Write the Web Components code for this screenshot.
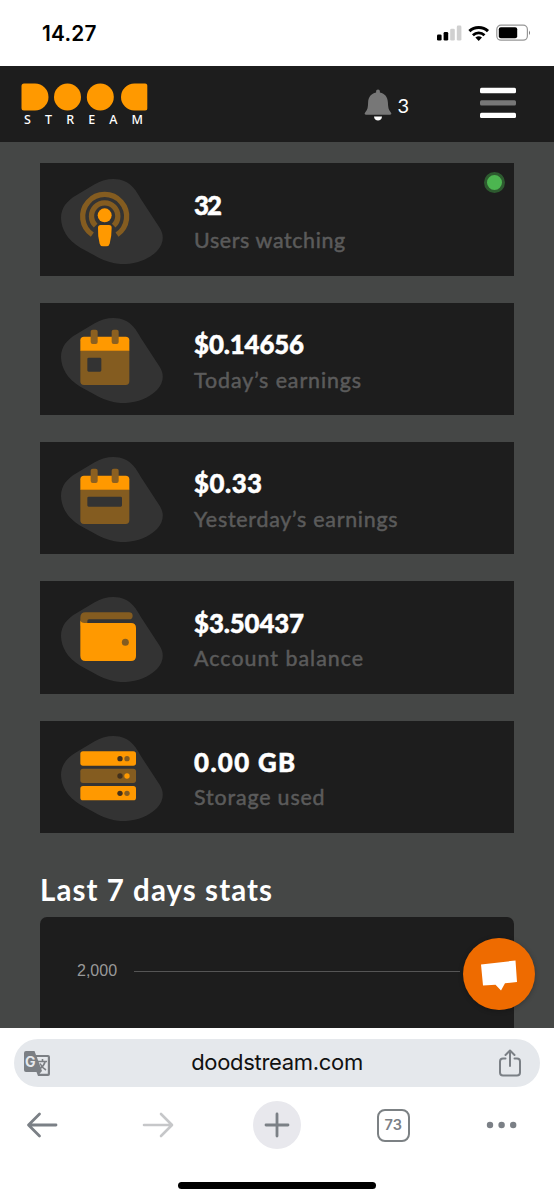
<!DOCTYPE html>
<html lang="en">
<head>
<meta charset="utf-8">
<title>DoodStream</title>
<style>
html,body{margin:0;padding:0}
body{width:554px;height:1200px;overflow:hidden;background:#fff;font-family:Lato,"Liberation Sans",sans-serif}
</style>
</head>
<body>
<dood-screen></dood-screen>
<script>
const define = (name, html, after) => customElements.define(name, class extends HTMLElement {
  connectedCallback() {
    if (this.shadowRoot) return;
    this.attachShadow({ mode: 'open' }).innerHTML = typeof html === 'function' ? html(this) : html;
    if (after) after(this);
  }
});

// Spreads a line of text over a given width by adjusting its tracking.
define('fit-text', `<style>:host{display:block;white-space:nowrap;width:max-content}span{display:inline-block}</style><span><slot></slot></span>`, el => {
  const n = el.textContent.length;
  const w = el.shadowRoot.querySelector('span').getBoundingClientRect().width;
  el.style.letterSpacing = ((+el.getAttribute('width') - w) / (n - 1)) + 'px';
});

define('status-bar', `<style>
:host{display:flex;height:66px;box-sizing:border-box;padding:0 23px 0 42px;align-items:center;justify-content:space-between;background:#fff;color:#000}
fit-text{font:600 20.800px/26px Inter,sans-serif;margin-top:2px}
svg{display:block}</style>
<fit-text width="54.500">14.27</fit-text>
<svg width="96" height="18" viewBox="0 0 96 18">
<rect x="2" y="10.5" width="4.6" height="6" rx="1.3"/><rect x="8.6" y="8" width="4.6" height="8.5" rx="1.3"/>
<g fill="#d0d0d0"><rect x="15.2" y="4.8" width="4.6" height="11.7" rx="1.3"/><rect x="21.8" y="1.6" width="4.6" height="14.9" rx="1.3"/></g>
<g fill="none" stroke="#000" stroke-width="3"><path d="M34.4 7.2a13.4 13.4 0 0 1 18.6 0"/><path d="M37.9 11.2a8.5 8.5 0 0 1 11.6 0" stroke-width="2.8"/></g>
<path d="M40.4 13.4q3.3-2.4 6.6 0l-3.3 3.5z"/>
<rect x="61.8" y="1.2" width="30.6" height="15" rx="4.2" fill="none" stroke="#969696" stroke-width="1.2"/><rect x="63.8" y="3.3" width="18.4" height="11" rx="2"/><path d="M94 6.4q2 2.3 0 4.6z" fill="#777"/>
</svg>`);

define('site-header', `<style>
:host{display:flex;height:76px;box-sizing:border-box;padding:0 38px 0 21px;background:#1d1d1d;color:#fff;justify-content:space-between}
.brand{padding-top:17px}svg{display:block}
.brand fit-text{font:500 12.5px/14px "Noto Sans",sans-serif;margin:1.5px 0 0 3px}
.right{display:flex;align-items:flex-start}
.bell{margin:23px 5px 0 0}.n{font:400 20px/24px Lato,sans-serif;margin:27px 71px 0 0}.menu{margin-top:21px}
</style>
<div class="brand"><svg width="127" height="28" viewBox="0 0 127 28" fill="#ff9900"><path d="M3 .5H14a13.5 13.5 0 0 1 0 27H3a2.5 2.5 0 0 1-2.5-2.5V3A2.5 2.5 0 0 1 3 .5z"/><circle cx="46.5" cy="14" r="13.5"/><circle cx="79.3" cy="14" r="13.5"/><path d="M124 .5H113.5a13.5 13.5 0 0 0 0 27H124a2.3 2.3 0 0 0 2.3-2.5V3A2.3 2.3 0 0 0 124 .5z"/></svg><fit-text width="119">STREAM</fit-text></div>
<div class="right">
<svg class="bell" width="28" height="33" viewBox="0 0 28 33"><path fill="#777" d="M14 .5c1.2 0 1.900.8 1.900 1.900v1.200c5 1 7.800 4.500 8 10 .2 4.500.5 7.500 2.800 9.600 1.200 1.200.7 2.600-.8 2.600H2.100c-1.500 0-2-1.400-.8-2.600 2.300-2.100 2.700-5.100 2.800-9.600.2-5.500 3-9 8-10V2.400C12.100 1.300 12.800.5 14 .5z"/><path fill="#fff" d="M10 27.500h8c0 5.300-8 5.300-8 0z"/></svg>
<span class="n">3</span>
<svg class="menu" width="36" height="32" viewBox="0 0 36 32"><g fill="#fff"><rect y=".8" width="36" height="5.400" rx="1.500"/><rect y="25.700" width="36" height="5.400" rx="1.500"/></g><rect y="13.300" width="36" height="5.200" rx="1.500" fill="#777"/></svg>
</div>`);

const BLOB = '<path fill="#333" d="M92 188C92 158 110 136 138 120L193 87C236 62 284 67 310 98C319 109 326 121 332 132L388 217C402 240 401 264 380 287C352 315 312 328 270 326C246 324 224 316 205 307L150 277C110 253 93 221 92 188Z"/>';
const cal = hole => `<g transform="translate(0 2)"><path fill="#845c20" fill-rule="evenodd" d="M150 166H297V259Q297 270 286 270H161Q150 270 150 259ZM${hole}Z"/><path fill="#f90" d="M150 167V136Q150 125 161 125H286Q297 125 297 136V167Z"/><g fill="#8c6020"><rect x="181" y="104" width="21" height="43" rx="6"/><rect x="244" y="104" width="21" height="43" rx="6"/></g></g>`;
const ICONS = {
  live: `<g fill="none" stroke="#845c20" stroke-width="16"><path d="M186 238A66 66 0 1 1 260 238"/><path d="M196 211A39.500 39.500 0 1 1 250 211"/></g><g fill="#f90" stroke="#333" stroke-width="7" paint-order="stroke"><circle cx="223" cy="180" r="21"/><path d="M203 217Q203 209 211 209H236Q244 209 244 217Q244 244 238 265Q236 273 228 273H218Q210 273 208 265Q202 244 203 217Z"/></g>`,
  today: cal('175 188H209Q213 188 213 192V226Q213 230 209 230H175Q171 230 171 226V192Q171 188 175 188'),
  yesterday: cal('175 188H271Q275 188 275 192V214Q275 218 271 218H175Q171 218 171 214V192Q171 188 175 188'),
  wallet: `<g transform="translate(0 7)"><path fill="#845c20" d="M150 150V126Q150 110 166 110H296Q306 110 307 120Q307 131 296 131H176Q171 131 171 136V150Z"/><path fill="#f90" d="M150 134Q152 142 162 142H302Q317 142 317 157V241Q317 256 302 256H166Q150 256 150 240Z"/><circle cx="285" cy="200" r="10.500" fill="#845c20"/></g>`,
  storage: `<g transform="translate(0 9)"><g fill="#f90"><rect x="150" y="108" width="167" height="43" rx="8"/><rect x="150" y="212" width="167" height="43" rx="8"/></g><rect x="150" y="160" width="167" height="43" rx="8" fill="#845c20"/><g fill="#42301c"><circle cx="269" cy="130" r="8"/><circle cx="269" cy="182" r="8"/><circle cx="269" cy="234" r="8"/></g><g fill="#845c20"><circle cx="290" cy="130" r="8"/><circle cx="290" cy="234" r="8"/></g><circle cx="290" cy="182" r="8" fill="#f90"/></g>`
};
define('stat-card', el => `<style>
:host{display:flex;position:relative;height:112.300px;background:#1d1d1d;box-sizing:border-box;padding:15.400px 0 0 20.600px}
svg{display:block;flex:none}
.t{margin:11px 0 0 31.500px}
.v{font:900 25.800px/30px Lato,sans-serif;color:#fff;-webkit-text-stroke:.5px #fff}
.l{font:400 21.400px/26px Lato,sans-serif;color:#5b5b5b;margin-top:7.500px;-webkit-text-stroke:.5px #5b5b5b}
i{position:absolute;right:9px;top:8.300px;width:15px;height:15px;border:3px solid #2d5a2f;border-radius:50%;background:#4cb550}
</style><svg width="102" height="85" viewBox="92 71 306 255">${BLOB}${ICONS[el.getAttribute('icon')]}</svg>
<div class="t"><fit-text class="v" width="${el.getAttribute('vw')}">${el.getAttribute('value')}</fit-text><fit-text class="l" width="${el.getAttribute('lw')}">${el.getAttribute('label')}</fit-text></div>${el.hasAttribute('online') ? '<i></i>' : ''}`);

define('stats-panel', `<style>
:host{display:block}
h2{margin:0;font:700 29.500px/36px Lato,sans-serif;color:#fff}
.p{height:108px;margin-top:9.500px;background:#1d1d1d;border-radius:7px;display:flex;align-items:center;padding:0 0 13px 37px}
.r{display:flex;align-items:center;flex:1}
span{font:400 16px/20px "Liberation Sans",sans-serif;color:#999}
b{height:1.500px;flex:1;background:#555;margin-left:17px;margin-right:54px}
</style><h2><fit-text width="232">Last 7 days stats</fit-text></h2><div class="p"><div class="r"><span>2,000</span><b></b></div></div>`);

define('chat-button', `<style>:host{display:block;width:72px;height:72px;border-radius:50%;background:#ee6b00;box-shadow:0 1px 5px #0004}svg{display:block}</style>
<svg width="72" height="72" viewBox="0 0 72 72"><path fill="#fff" d="M18 26.500L52.500 22.500L54 44L42 45.300L38 52.500L32.500 46.700L20 47.500Z"/></svg>`);

define('browser-bar', `<style>
:host{display:block;height:172px;background:#fff;box-sizing:border-box;padding-top:11px}
svg{display:block}
.url{height:48px;margin:0 14px;border-radius:24px;background:#e5e8ec;display:flex;align-items:center;justify-content:space-between;padding:0 19px 0 10px;box-sizing:border-box;color:#111}
.url fit-text{font:400 22px/28px Inter,sans-serif;margin:-2px 0 0 3px}
nav{display:flex;height:48px;margin-top:14px;padding:0 37px 0 26px;align-items:center;justify-content:space-between;color:#7b8086}
.plus{width:48px;height:48px;border-radius:50%;background:#e8e8ed;display:grid;place-items:center;margin-left:2px}
.tabs{width:33px;height:33px;box-sizing:border-box;border:2.500px solid #7c8184;border-radius:8px;display:grid;place-items:center;font:600 14.500px/18px Inter,sans-serif}
.home{width:198px;height:7px;border-radius:4px;background:#000;margin:33px auto 0}
</style>
<div class="url"><svg width="28" height="27" viewBox="0 0 28 27"><path fill="#7b7f84" d="M2 1H10.500L12 5H24Q26 5 26 7V24Q26 26 24 26H14L12.500 22H2Q0 22 0 20V3Q0 1 2 1Z"/><path fill="#e5e8ec" d="M12.800 7H23.800V23.800H15.500L18 21Z"/><g fill="none" stroke="#7b7f84" stroke-width="1.600"><path d="M14 11.500H23M18.500 9V12M21 12Q20 16 15.500 19M16 13.500Q18 17.500 22 20"/></g><text x="1" y="17" font-family="Inter,sans-serif" font-size="14" font-weight="700" fill="#e5e8ec">G</text></svg>
<fit-text width="172">doodstream.com</fit-text>
<svg width="22" height="28" viewBox="0 0 22 28" fill="none" stroke="#7b8086" stroke-width="2" stroke-linecap="round" stroke-linejoin="round"><path d="M6.500 9.500H4Q1 9.500 1 12.500V23.500Q1 26.500 4 26.500H18Q21 26.500 21 23.500V12.500Q21 9.500 18 9.500H15.500M11 17V2M6.500 6L11 1.500L15.500 6"/></svg></div>
<nav>
<svg width="32" height="28" viewBox="0 0 32 28" fill="none" stroke="#7b8086" stroke-width="2.800" stroke-linecap="round" stroke-linejoin="round"><path d="M30 14H3M13.500 3L2.500 14L13.500 25"/></svg>
<svg style="margin-left:8px" width="32" height="28" viewBox="0 0 32 28" fill="none" stroke="#c6c7c9" stroke-width="2.600" stroke-linecap="round" stroke-linejoin="round"><path d="M2 14H29M19 3L30 14L19 25"/></svg>
<div class="plus"><svg width="26" height="26" viewBox="0 0 26 26" stroke="#7b8086" stroke-width="2.800" stroke-linecap="round"><path d="M2 13H24M13 2V24"/></svg></div>
<div class="tabs">73</div>
<svg width="31" height="8" viewBox="0 0 31 8" fill="#7b8086"><circle cx="4" cy="4" r="3.200"/><circle cx="15.600" cy="4" r="3.200"/><circle cx="27.200" cy="4" r="3.200"/></svg>
</nav><div class="home"></div>`);

define('dood-screen', `<style>
:host{display:flex;flex-direction:column;height:1200px;width:554px}
main{position:relative;height:886px;overflow:hidden;background:#454746;box-sizing:border-box;padding:21.400px 40px 0}
.cards{display:grid;gap:27px}
stats-panel{margin-top:39px}
chat-button{position:absolute;left:463px;top:795.500px}
</style><status-bar></status-bar><site-header></site-header>
<main><div class="cards">
<stat-card icon="live" value="32" vw="28" label="Users watching" lw="151" online></stat-card>
<stat-card icon="today" value="$0.14656" vw="110" label="Today’s earnings" lw="167"></stat-card>
<stat-card icon="yesterday" value="$0.33" vw="68" label="Yesterday’s earnings" lw="203.500"></stat-card>
<stat-card icon="wallet" value="$3.50437" vw="110" label="Account balance" lw="169"></stat-card>
<stat-card icon="storage" value="0.00 GB" vw="101" label="Storage used" lw="130.500"></stat-card>
</div><stats-panel></stats-panel><chat-button></chat-button></main>
<browser-bar></browser-bar>`);
</script>
</body>
</html>
